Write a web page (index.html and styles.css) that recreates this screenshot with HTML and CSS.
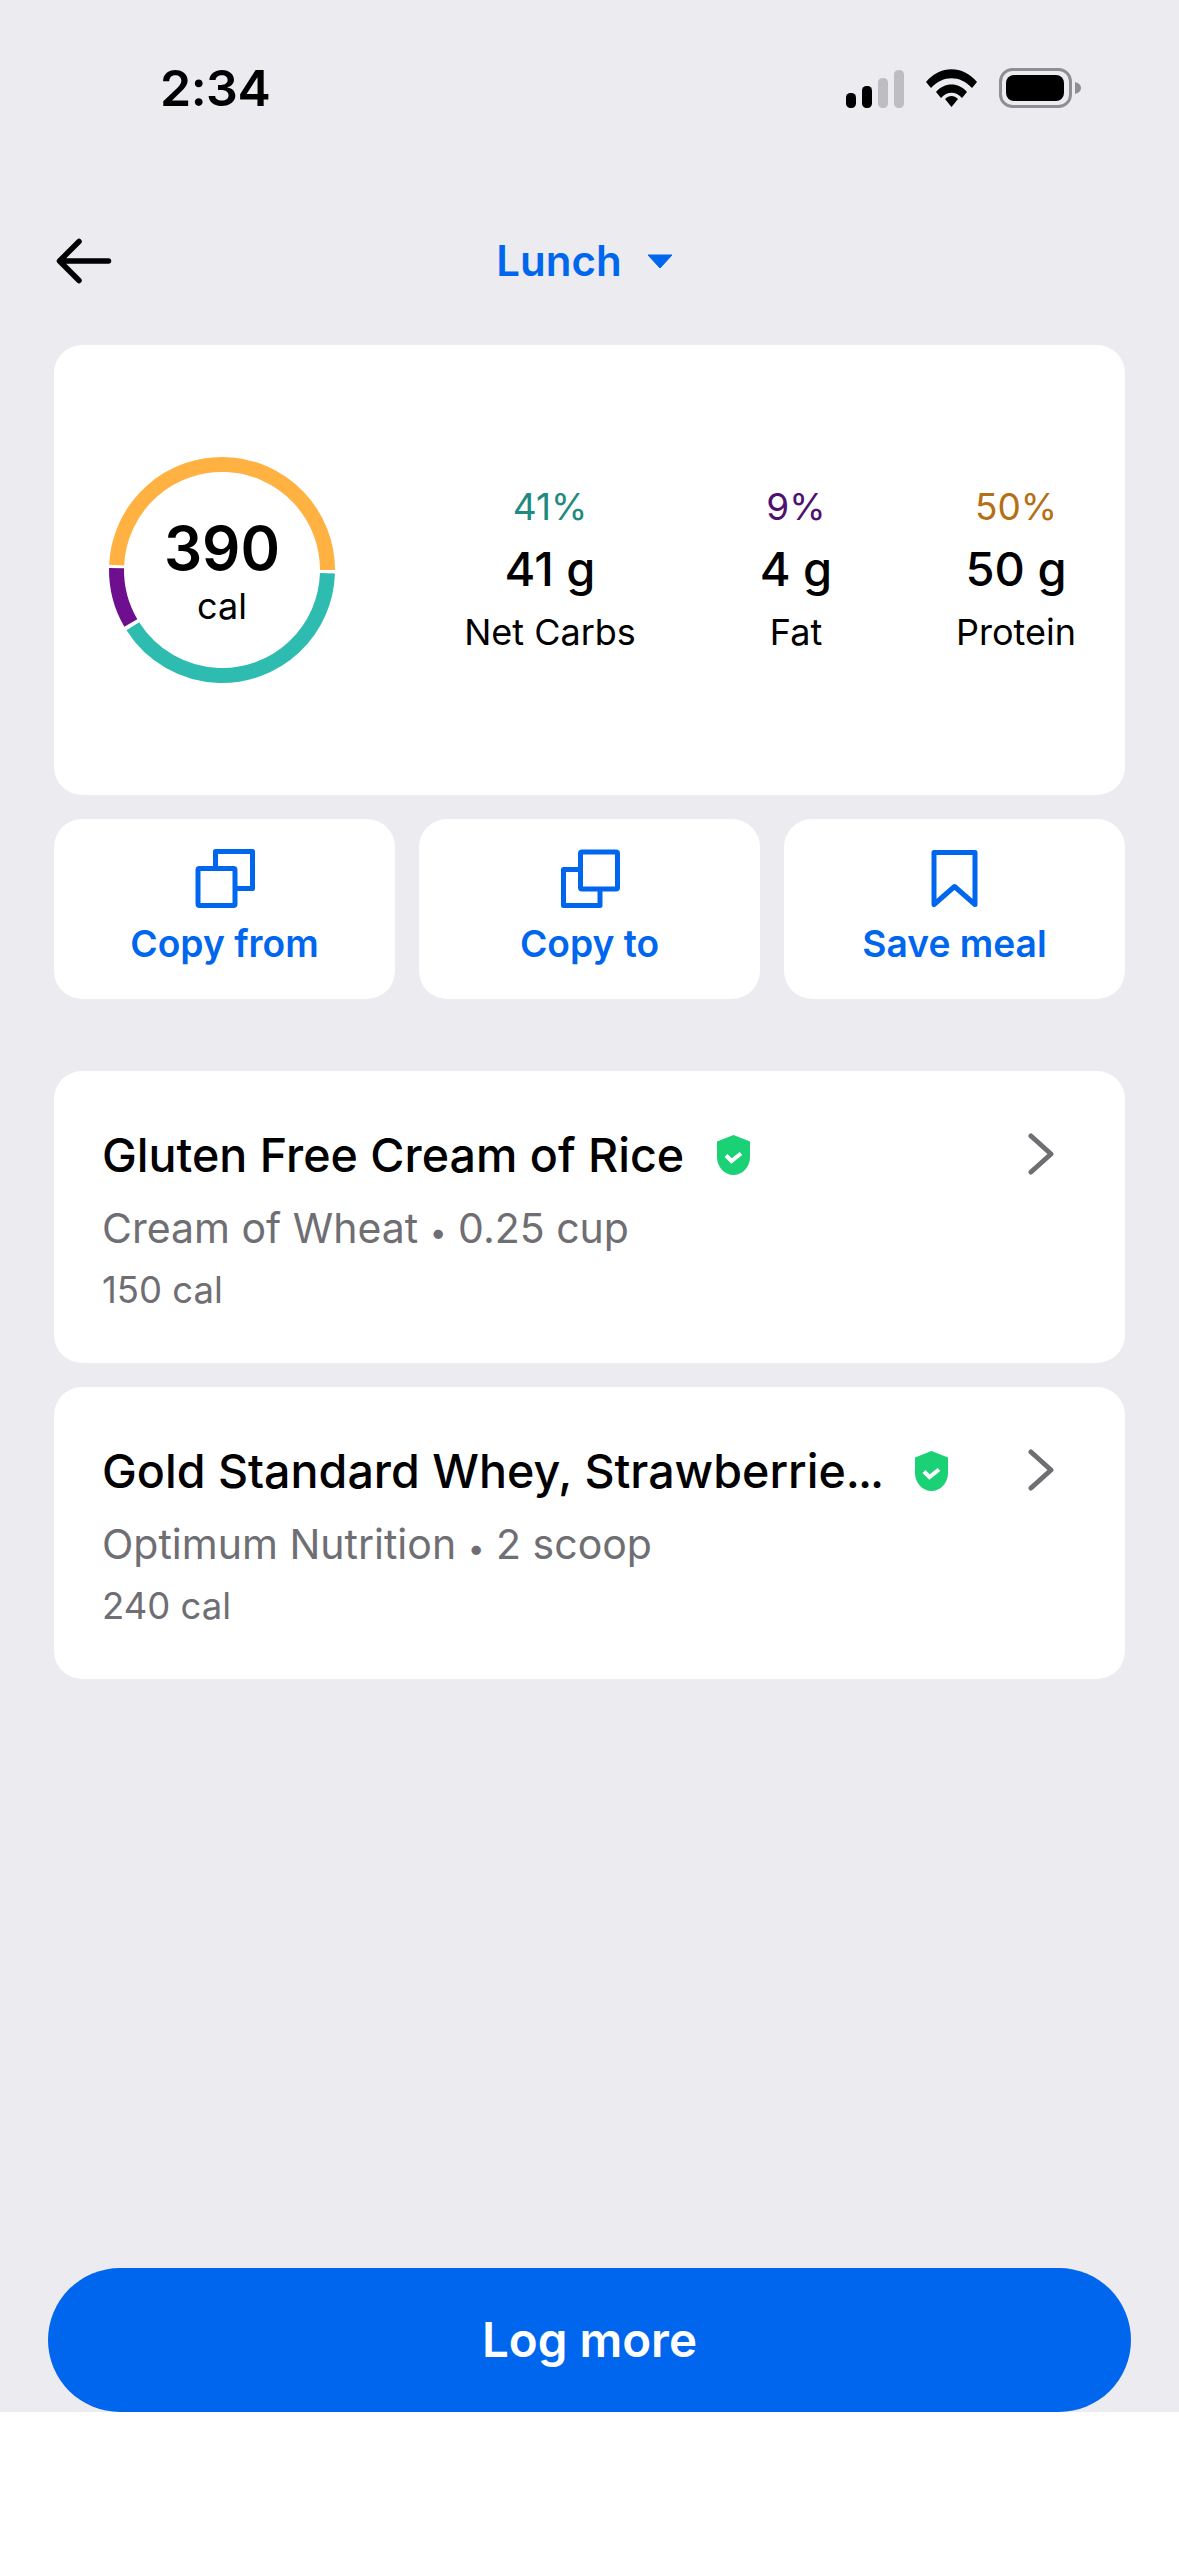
FILE: index.html
```html
<!DOCTYPE html>
<html lang="en">
<head>
<meta charset="utf-8">
<title>Lunch</title>
<link rel="stylesheet" href="styles.css">
</head>
<body>
<div class="screen">
  <div class="status">
    <span class="time">2:34</span>
    <div class="status-icons">
      <svg class="signal" width="58" height="38" viewBox="0 0 58 38"><rect x="0" y="23" width="10" height="15" rx="4.5" fill="#000"/><rect x="16" y="16" width="10" height="22" rx="4.5" fill="#000"/><rect x="32" y="8" width="10" height="30" rx="4.5" fill="#bdbdc2"/><rect x="48" y="0" width="10" height="38" rx="4.5" fill="#bdbdc2"/></svg>
      <svg class="wifi" width="51" height="38" viewBox="0 0 51 38"><path d="M0 13 C14 -4 37 -4 51 13 L46 19 C34 6 17 6 5 19Z" fill="#000"/><path d="M10 23 C18 13 33 13 41 23 L36 29 C30 22 21 22 15 29Z" fill="#000"/><path d="M19 30 C23 26 28 26 32 30 L25.5 38Z" fill="#000"/></svg>
      <svg class="battery" width="82" height="40" viewBox="0 0 82 40"><rect x="1.5" y="1.5" width="70" height="37" rx="12" fill="none" stroke="#8e8e93" stroke-width="3"/><rect x="7" y="7" width="58" height="26" rx="8" fill="#000"/><path d="M76 14 C80 15 82 17 82 20 C82 23 80 25 76 26Z" fill="#8e8e93"/></svg>
    </div>
  </div>

  <div class="nav">
    <svg class="back" width="58" height="46" viewBox="0 0 58 46"><path d="M54.5 23H6M25 3.500 5.500 23 25 42.500" fill="none" stroke="#000" stroke-width="5.5" stroke-linecap="round" stroke-linejoin="round"/></svg>
    <div class="nav-title">Lunch<svg class="caret" width="26" height="15" viewBox="0 0 26 15"><path d="M1 1H25L13 14Z" fill="#0066ee" stroke="#0066ee" stroke-linejoin="round"/></svg></div>
    <span class="nav-spacer"></span>
  </div>

  <section class="card hero">
    <div class="ring">
      <svg width="226" height="226" viewBox="0 0 226 226">
        <circle class="seg seg-orange" cx="113" cy="113" r="105.5" pathLength="360" transform="rotate(182.7 113 113)"/>
        <circle class="seg seg-teal" cx="113" cy="113" r="105.5" pathLength="360" transform="rotate(1.8 113 113)"/>
        <circle class="seg seg-purple" cx="113" cy="113" r="105.5" pathLength="360" transform="rotate(149.8 113 113)"/>
      </svg>
      <div class="ring-text">
        <div class="ring-num">390</div>
        <div class="ring-unit">cal</div>
      </div>
    </div>
    <div class="macros">
      <div class="macro macro-carb">
        <div class="pct">41%</div>
        <div class="grams">41 g</div>
        <div class="name">Net Carbs</div>
      </div>
      <div class="macro macro-fat">
        <div class="pct">9%</div>
        <div class="grams">4 g</div>
        <div class="name">Fat</div>
      </div>
      <div class="macro macro-pro">
        <div class="pct">50%</div>
        <div class="grams">50 g</div>
        <div class="name">Protein</div>
      </div>
    </div>
  </section>

  <div class="actions">
    <div class="card tile">
      <svg width="60" height="60" viewBox="0 0 60 60"><path d="M20.500 20V3.500H57.500V40.500H40" class="icon-line"/><rect x="3" y="20.500" width="37" height="37" rx="1.500" class="icon-line"/></svg>
      <span>Copy from</span>
    </div>
    <div class="card tile">
      <svg width="60" height="60" viewBox="0 0 60 60"><path d="M20 21.500H3.500V57.500H40V41" class="icon-line"/><rect x="20.500" y="4" width="37" height="37" rx="1.500" class="icon-line"/></svg>
      <span>Copy to</span>
    </div>
    <div class="card tile">
      <svg width="60" height="60" viewBox="0 0 60 60"><path d="M9 4.500H50V56.500L29.500 38.500 9 56.500Z" class="icon-line"/></svg>
      <span>Save meal</span>
    </div>
  </div>

  <div class="list">
    <article class="card item">
      <div class="item-main">
        <div class="item-title"><span class="item-name">Gluten Free Cream of Rice</span><svg class="shield" width="33" height="40" viewBox="0 0 33 40"><path d="M16.500 0 33 6.500V22C33 32 25.500 40 16.500 40S0 32 0 22V6.500Z" fill="#1bd176"/><path d="M9 20.500l5.500 5.500 9.500-7.500" fill="none" stroke="#fff" stroke-width="4"/></svg></div>
        <div class="item-sub">Cream of Wheat <span class="dot">•</span> 0.25 cup</div>
        <div class="item-cal">150 cal</div>
      </div>
      <svg class="chevron" width="26" height="42" viewBox="0 0 26 42"><path d="M3 3 23 21 3 39" fill="none" stroke="#6e6e73" stroke-width="5" stroke-linecap="round" stroke-linejoin="round"/></svg>
    </article>
    <article class="card item">
      <div class="item-main">
        <div class="item-title"><span class="item-name">Gold Standard Whey, Strawberrie<span class="ell">...</span></span><svg class="shield" width="33" height="40" viewBox="0 0 33 40"><path d="M16.500 0 33 6.500V22C33 32 25.500 40 16.500 40S0 32 0 22V6.500Z" fill="#1bd176"/><path d="M9 20.500l5.500 5.500 9.500-7.500" fill="none" stroke="#fff" stroke-width="4"/></svg></div>
        <div class="item-sub">Optimum Nutrition <span class="dot">•</span> 2 scoop</div>
        <div class="item-cal">240 cal</div>
      </div>
      <svg class="chevron" width="26" height="42" viewBox="0 0 26 42"><path d="M3 3 23 21 3 39" fill="none" stroke="#6e6e73" stroke-width="5" stroke-linecap="round" stroke-linejoin="round"/></svg>
    </article>
  </div>

  <div class="log-btn">Log more</div>
</div>
<div class="home-area"></div>
</body>
</html>
```
FILE: styles.css
```css
* { box-sizing: border-box; }
html, body { margin: 0; padding: 0; }
body {
  width: 1179px;
  height: 2556px;
  background: #fff;
  font-family: Inter, "Liberation Sans", sans-serif;
  color: #000;
  overflow: hidden;
}
.screen {
  height: 2412px;
  background: #ebebf0;
  display: flex;
  flex-direction: column;
}
.status {
  height: 174px;
  padding: 0 98px 0 160px;
  display: flex;
  justify-content: space-between;
  align-items: flex-start;
}
.time {
  margin-top: 58px;
  font-size: 50px;
  line-height: 60px;
  font-weight: 600;
  letter-spacing: -0.5px;
}
.status-icons {
  margin-top: 68px;
  display: flex;
  align-items: center;
  gap: 22px;
}
.signal { margin-top: 1px; }
.nav {
  height: 171px;
  padding: 3px 54px 0;
  display: grid;
  grid-template-columns: 1fr auto 1fr;
  align-items: center;
}
.nav-title {
  margin-right: 10px;
  display: flex;
  align-items: center;
  gap: 25px;
  font-size: 42px;
  line-height: 50px;
  font-weight: 600;
  color: #0066ee;
}
.card {
  background: #fff;
  border-radius: 28px;
}
.hero {
  margin: 0 54px;
  height: 450px;
  display: flex;
  align-items: center;
  position: relative;
}
.ring {
  position: relative;
  margin-left: 55px;
  width: 226px;
  height: 226px;
  flex: none;
}
.ring svg { display: block; overflow: visible; }
.seg { fill: none; stroke-width: 15; }
.seg-orange { stroke: #ffb142; stroke-dasharray: 177.2 360; }
.seg-teal { stroke: #2ebcb0; stroke-dasharray: 145.9 360; }
.seg-purple { stroke: #6d0f8f; stroke-dasharray: 31.2 360; }
.ring-text {
  position: absolute;
  inset: 0;
  display: flex;
  flex-direction: column;
  align-items: center;
  padding-top: 60px;
}
.ring-num {
  font-size: 60px;
  line-height: 62px;
  font-weight: 600;
}
.ring-unit {
  font-size: 36px;
  line-height: 42px;
  margin-top: 6px;
}
.macros {
  position: absolute;
  inset: 0;
  pointer-events: none;
}
.macro {
  position: absolute;
  top: 139px;
  text-align: center;
  transform: translateX(-50%);
  white-space: nowrap;
}
.macro-carb { left: 496px; }
.macro-fat { left: 742px; }
.macro-pro { left: 962px; }
.pct { font-size: 37px; line-height: 46px; }
.grams { font-size: 47px; line-height: 58px; margin-top: 10px; font-weight: 500; }
.name { font-size: 36px; line-height: 46px; margin-top: 11px; }
.macro-carb .pct { color: #1f8a80; }
.macro-fat .pct { color: #4f1170; }
.macro-pro .pct { color: #b56f14; }
.actions {
  margin: 24px 54px 0;
  display: grid;
  grid-template-columns: repeat(3, 1fr);
  gap: 24px;
}
.tile {
  height: 180px;
  padding-top: 29px;
  display: flex;
  flex-direction: column;
  align-items: center;
  gap: 13px;
  font-size: 37.2px;
  line-height: 46px;
  font-weight: 600;
  color: #0066ee;
}
.tile svg { display: block; }
.icon-line {
  fill: none;
  stroke: #0066ee;
  stroke-width: 5;
  stroke-linejoin: round;
}
.list {
  margin: 72px 54px 0;
  display: flex;
  flex-direction: column;
  gap: 24px;
}
.item {
  height: 292px;
  padding: 0 71px 0 48px;
  display: flex;
  justify-content: space-between;
  align-items: flex-start;
}
.item-main { min-width: 0; padding-top: 52px; }
.item-title {
  display: flex;
  align-items: center;
  gap: 33px;
  height: 64px;
}
.item-name {
  font-size: 46.6px;
  line-height: 64px;
  font-weight: 500;
  white-space: nowrap;
}
.ell { letter-spacing: -2px; }
.shield { display: block; flex: none; }
.item-sub {
  margin-top: 15px;
  font-size: 41px;
  line-height: 52px;
  color: #6e6e73;
}
.dot { font-size: 30px; }
.item-cal {
  margin-top: 10px;
  font-size: 36.5px;
  line-height: 44px;
  color: #6e6e73;
}
.chevron { display: block; margin-top: 62px; flex: none; }
.log-btn {
  margin: auto 48px 0;
  height: 144px;
  border-radius: 72px / 72px;
  background: #0066ee;
  color: #fff;
  font-size: 47.5px;
  font-weight: 600;
  line-height: 144px;
  text-align: center;
}
.home-area { height: 144px; background: #fff; }
```
